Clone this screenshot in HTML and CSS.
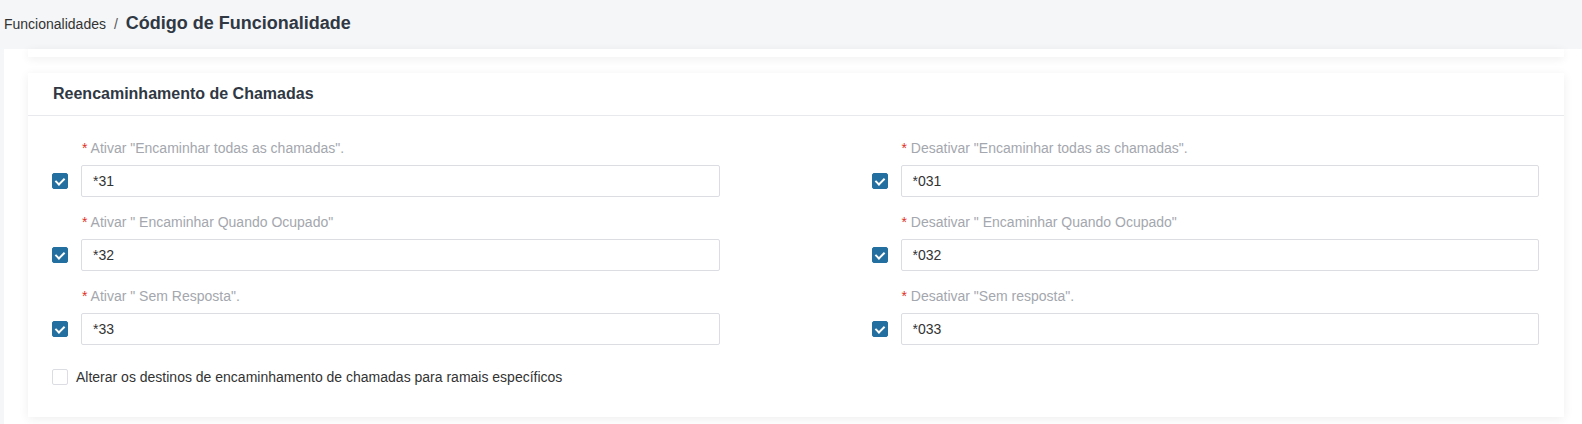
FILE: index.html
```html
<!DOCTYPE html>
<html lang="pt">
<head>
  <meta charset="UTF-8">
  <title>Código de Funcionalidade</title>
  <link rel="stylesheet" href="styles.css">
</head>
<body>

  <!-- Cabeçalho / breadcrumb -->
  <div class="topo">
    <span class="migalha">Funcionalidades</span>
    <span class="separador">/</span>
    <span class="titulo-pagina">Código de Funcionalidade</span>
  </div>

  <div class="conteudo">
    <div class="cartao cartao-cortado"></div>

    <div class="cartao">
      <div class="cartao-cabecalho">Reencaminhamento de Chamadas</div>
      <div class="cartao-corpo">
        <div class="grelha">
          <div class="campo">
            <label class="rotulo"><span class="obrigatorio">*</span> Ativar "Encaminhar todas as chamadas".</label>
            <div class="linha">
              <span class="caixa marcada"></span>
              <input type="text" value="*31">
            </div>
          </div>
          <div class="campo">
            <label class="rotulo"><span class="obrigatorio">*</span> Desativar "Encaminhar todas as chamadas".</label>
            <div class="linha">
              <span class="caixa marcada"></span>
              <input type="text" value="*031">
            </div>
          </div>
          <div class="campo">
            <label class="rotulo"><span class="obrigatorio">*</span> Ativar " Encaminhar Quando Ocupado"</label>
            <div class="linha">
              <span class="caixa marcada"></span>
              <input type="text" value="*32">
            </div>
          </div>
          <div class="campo">
            <label class="rotulo"><span class="obrigatorio">*</span> Desativar " Encaminhar Quando Ocupado"</label>
            <div class="linha">
              <span class="caixa marcada"></span>
              <input type="text" value="*032">
            </div>
          </div>
          <div class="campo">
            <label class="rotulo"><span class="obrigatorio">*</span> Ativar " Sem Resposta".</label>
            <div class="linha">
              <span class="caixa marcada"></span>
              <input type="text" value="*33">
            </div>
          </div>
          <div class="campo">
            <label class="rotulo"><span class="obrigatorio">*</span> Desativar "Sem resposta".</label>
            <div class="linha">
              <span class="caixa marcada"></span>
              <input type="text" value="*033">
            </div>
          </div>
        </div>

        <div class="opcao">
          <span class="caixa"></span>
          <span>Alterar os destinos de encaminhamento de chamadas para ramais específicos</span>
        </div>
      </div>
    </div>
  </div>

</body>
</html>
```

FILE: styles.css
```css
body {
  margin: 0;
  font-family: "Liberation Sans", Arial, sans-serif;
  font-size: 14px;
  background-color: #f5f6f8;
  color: #333;
  overflow: hidden;
}

.topo {
  height: 49px;
  display: flex;
  align-items: center;
  padding: 0 0 2px 4px;
  box-sizing: border-box;
  background-color: #f5f6f8;
}

.migalha {
  font-size: 14px;
  color: #333;
}

.separador {
  margin: 0 8px;
  color: #555;
}

.titulo-pagina {
  font-size: 18px;
  font-weight: bold;
  color: #303843;
}

.conteudo {
  margin-left: 4px;
  background: #fff;
  padding: 0 18px 10px 24px;
}

.cartao {
  background: #fff;
  box-shadow: 0px 2px 10px rgba(0, 0, 0, 0.07);
  margin-bottom: 16px;
}

.cartao-cortado {
  height: 8px;
}

.cartao-cabecalho {
  height: 42px;
  line-height: 42px;
  padding: 0 25px;
  font-size: 16px;
  font-weight: bold;
  color: #303843;
  border-bottom: 1px solid #e8e9ec;
}

.cartao-corpo {
  padding: 22px 25px 32px 24px;
}

.grelha {
  display: grid;
  grid-template-columns: 1fr 1fr;
  column-gap: 152px;
  row-gap: 15px;
}

.rotulo {
  display: block;
  height: 20px;
  line-height: 20px;
  padding-left: 30px;
  color: #a4a7ae;
  margin-bottom: 7px;
}

.obrigatorio {
  color: #e0311f;
}

.linha {
  display: flex;
  align-items: center;
  gap: 13px;
}

.linha input {
  flex: 1;
  height: 32px;
  box-sizing: border-box;
  border: 1px solid #dcdde2;
  border-radius: 2px;
  padding: 0 11px;
  font-family: "Liberation Sans", Arial, sans-serif;
  font-size: 14px;
  color: #333;
}

.caixa {
  width: 16px;
  height: 16px;
  box-sizing: border-box;
  border: 1px solid #dcdde2;
  border-radius: 2px;
  background: #fff;
  flex-shrink: 0;
  position: relative;
}

.caixa.marcada {
  background-color: #236f9f;
  border-color: #236f9f;
}

.caixa.marcada::after {
  content: "";
  position: absolute;
  left: 4px;
  top: 2px;
  width: 4px;
  height: 7px;
  border: solid #fff;
  border-width: 0 2px 2px 0;
  transform: rotate(45deg);
}

.opcao {
  display: flex;
  align-items: center;
  gap: 8px;
  margin-top: 24px;
  color: #333;
}
```
